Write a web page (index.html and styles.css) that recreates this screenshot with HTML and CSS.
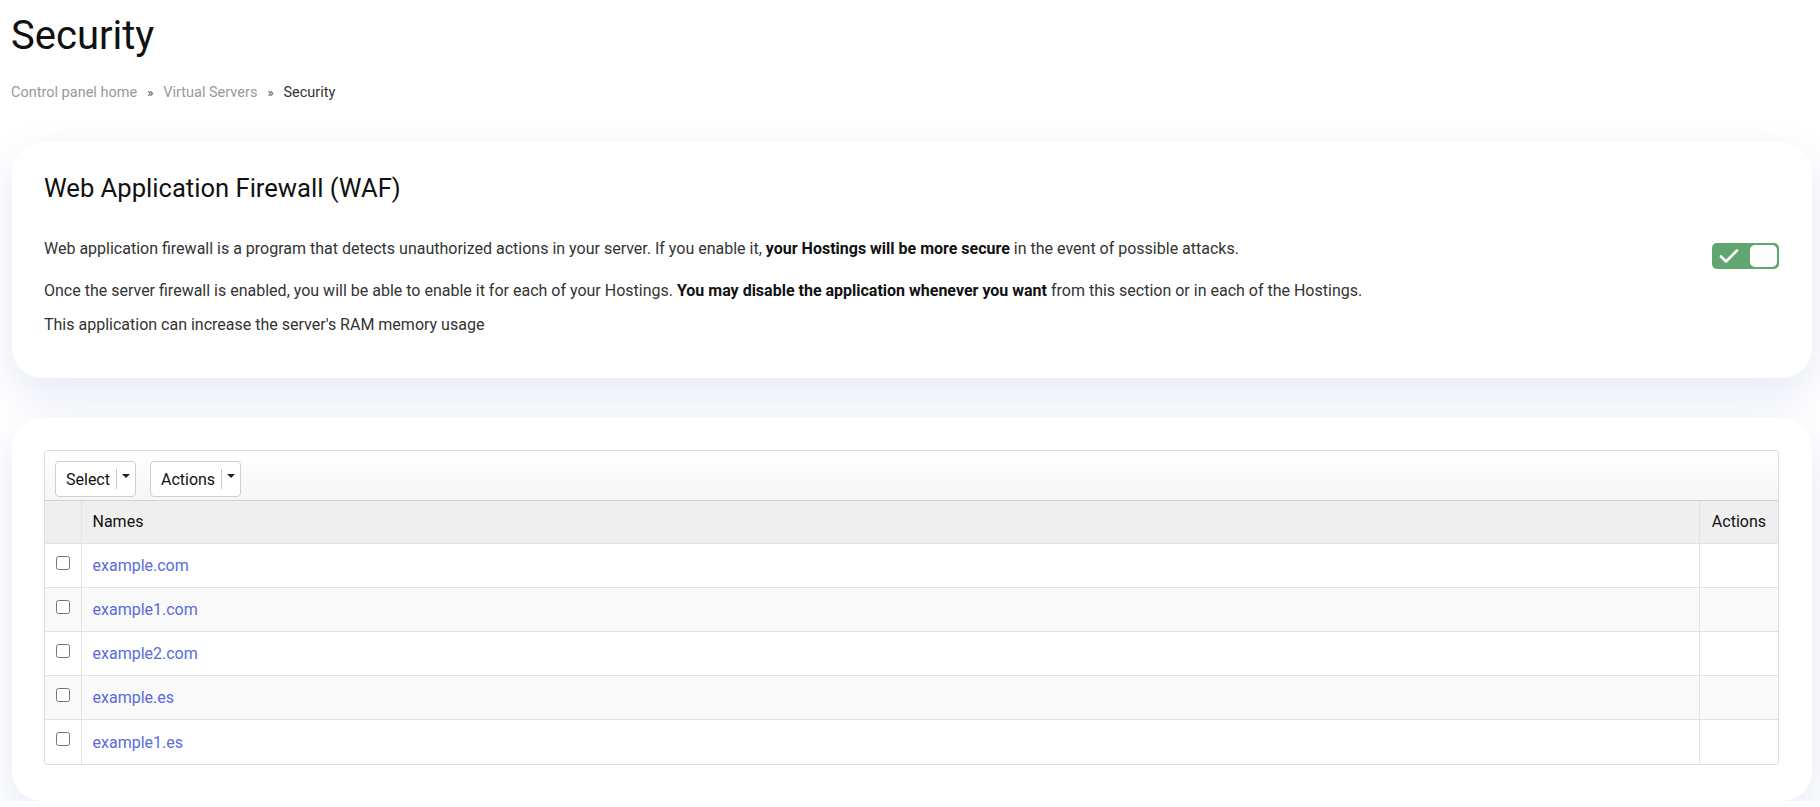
FILE: index.html
```html
<!DOCTYPE html>
<html lang="en">
<head>
<meta charset="utf-8">
<title>Security</title>
<link rel="stylesheet" href="styles.css">
</head>
<body>
<div class="page">
  <h1 class="page-title">Security</h1>
  <nav class="breadcrumb">
    <a class="crumb-link" href="#">Control panel home</a>
    <span class="sep">»</span>
    <a class="crumb-link" href="#">Virtual Servers</a>
    <span class="sep">»</span>
    <span class="crumb-current">Security</span>
  </nav>

  <section class="card waf-card">
    <h2 class="card-title">Web Application Firewall (WAF)</h2>
    <div class="waf-row">
      <p class="waf-text">Web application firewall is a program that detects unauthorized actions in your server. If you enable it, <strong>your Hostings will be more secure</strong> in the event of possible attacks.</p>
      <span class="toggle" role="switch" aria-checked="true">
        <svg class="toggle-check" width="20" height="16" viewBox="0 0 20 16"><path d="M2 8.5 L7 13.5 L18 2.5" fill="none" stroke="#fff" stroke-width="2.6" stroke-linecap="round" stroke-linejoin="round"/></svg>
        <span class="toggle-knob"></span>
      </span>
    </div>
    <p class="waf-text waf-p2">Once the server firewall is enabled, you will be able to enable it for each of your Hostings. <strong>You may disable the application whenever you want</strong> from this section or in each of the Hostings.</p>
    <p class="waf-text">This application can increase the server's RAM memory usage</p>
  </section>

  <section class="card list-card">
    <div class="grid">
      <div class="toolbar">
        <button class="dd-btn"><span class="dd-label">Select</span><span class="dd-div"></span><span class="dd-caret"></span></button>
        <button class="dd-btn"><span class="dd-label">Actions</span><span class="dd-div"></span><span class="dd-caret"></span></button>
      </div>
      <table class="data-table">
        <thead>
          <tr><th class="col-check"></th><th class="col-name">Names</th><th class="col-actions">Actions</th></tr>
        </thead>
        <tbody>
          <tr><td class="col-check"><input type="checkbox"></td><td class="col-name"><a class="row-link" href="#">example.com</a></td><td class="col-actions"></td></tr>
          <tr><td class="col-check"><input type="checkbox"></td><td class="col-name"><a class="row-link" href="#">example1.com</a></td><td class="col-actions"></td></tr>
          <tr><td class="col-check"><input type="checkbox"></td><td class="col-name"><a class="row-link" href="#">example2.com</a></td><td class="col-actions"></td></tr>
          <tr><td class="col-check"><input type="checkbox"></td><td class="col-name"><a class="row-link" href="#">example.es</a></td><td class="col-actions"></td></tr>
          <tr><td class="col-check"><input type="checkbox"></td><td class="col-name"><a class="row-link" href="#">example1.es</a></td><td class="col-actions"></td></tr>
        </tbody>
      </table>
    </div>
  </section>
</div>
</body>
</html>
```

FILE: styles.css
```css
* { box-sizing: border-box; }
html, body { margin: 0; padding: 0; }
body {
  background: #ffffff;
  font-family: Roboto, "Liberation Sans", Arial, sans-serif;
  color: #333;
  overflow: hidden;
}
.page {
  padding: 12px 8px 0 11px;
}
.page-title {
  margin: 0;
  font-size: 40px;
  line-height: 48px;
  font-weight: 400;
  color: #111;
}
.breadcrumb {
  margin-top: 23px;
  display: flex;
  align-items: center;
  font-size: 14.5px;
  line-height: 20px;
}
.crumb-link { color: #999; text-decoration: none; }
.crumb-current { color: #333; }
.sep { color: #444; padding: 0 10px; font-size: 13px; }

.card {
  background: #fff;
  border-radius: 30px;
  margin-left: 1px;
  box-shadow: 0 16px 44px rgba(70, 100, 190, 0.14);
}
.waf-card {
  margin-top: 39px;
  padding: 31px 33px 41px 32px;
}
.card-title {
  margin: 0 0 34px;
  font-size: 25.6px;
  line-height: 30px;
  font-weight: 400;
  color: #111;
}
.waf-row {
  display: flex;
  align-items: flex-start;
  justify-content: space-between;
  margin-bottom: 10px;
}
.waf-text {
  margin: 0;
  font-size: 16px;
  line-height: 24px;
  color: #333;
}
.waf-text strong { color: #111; font-weight: 700; }
.waf-p2 { margin-bottom: 10px; }

.toggle {
  flex: none;
  margin-top: 6px;
  width: 67px;
  height: 26px;
  border-radius: 5px;
  background: #60a66e;
  display: flex;
  align-items: center;
  justify-content: space-between;
  padding: 0 2px 0 7px;
}
.toggle-check { display: block; }
.toggle-knob {
  width: 27px;
  height: 22px;
  background: #fff;
  border-radius: 5px;
}

.list-card {
  margin-top: 40px;
  padding: 32px 33px 36px 32px;
}
.grid {
  border: 1px solid #dcdde2;
  border-radius: 3px;
  overflow: hidden;
}
.toolbar {
  height: 50px;
  padding: 10px 10px 0;
  display: flex;
  gap: 14px;
  background: linear-gradient(#ffffff, #f6f6f6);
  border-bottom: 1px solid #d2d2d2;
}
.dd-btn {
  height: 36px;
  display: flex;
  align-items: center;
  padding: 0 5px 0 10px;
  background: #fff;
  border: 1px solid #cfcfcf;
  border-radius: 4px;
  font-family: Roboto, "Liberation Sans", Arial, sans-serif;
  font-size: 16px;
  color: #111;
}
.dd-div {
  width: 1px;
  height: 20px;
  background: #c8c8c8;
  margin: 0 5px 0 6px;
}
.dd-caret {
  width: 0;
  height: 0;
  border-left: 4px solid transparent;
  border-right: 4px solid transparent;
  border-top: 4px solid #222;
  margin-top: -7px;
}

.data-table {
  width: 100%;
  border-collapse: collapse;
  font-size: 16px;
}
.data-table th, .data-table td {
  border: 1px solid #e3e3e3;
  padding: 0 11px;
  text-align: left;
}
.data-table tr > :first-child { border-left: 0; }
.data-table tr > :last-child { border-right: 0; }
.data-table thead th {
  border-top: 0;
  height: 42px;
  background: #efefef;
  font-weight: 400;
  color: #111;
}
.data-table tbody td { height: 44.2px; }
.data-table tbody tr:last-child td { border-bottom: 0; }
.data-table tbody tr:nth-child(even) td { background: #f9f9f9; }
.data-table .col-check { width: 36px; padding: 0; vertical-align: top; }
.col-check input { width: 14px; height: 14px; display: block; margin: 12px 0 0 11px; }
.data-table .col-actions { width: 1%; white-space: nowrap; padding: 0 12px; }
.row-link { color: #5a6be0; text-decoration: none; }
```
